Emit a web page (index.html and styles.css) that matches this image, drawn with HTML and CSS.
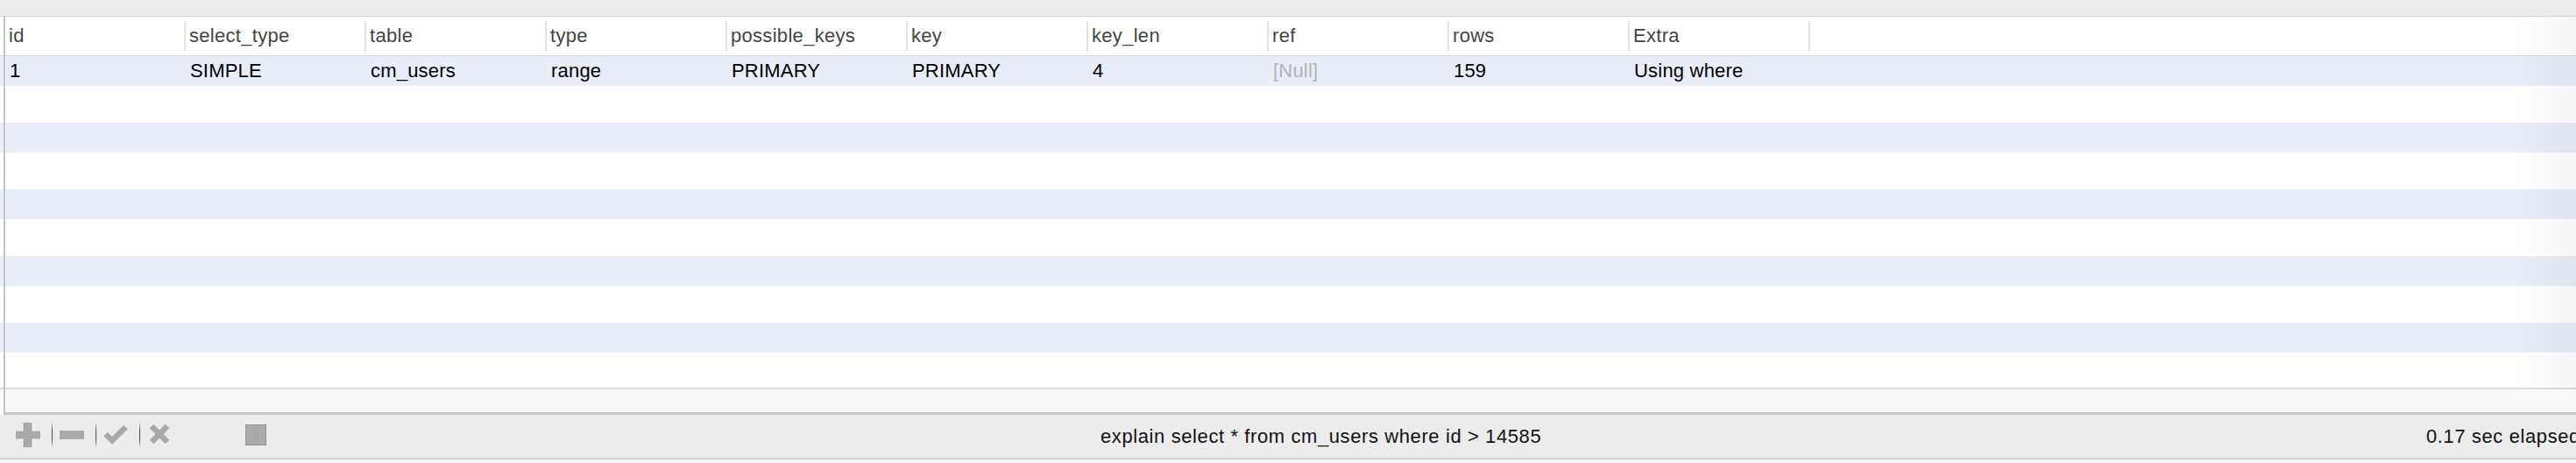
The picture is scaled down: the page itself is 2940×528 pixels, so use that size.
FILE: index.html
```html
<!DOCTYPE html>
<html>
<head>
<meta charset="utf-8">
<title>Explain result</title>
<link rel="stylesheet" href="styles.css">
</head>
<body>
<div class="topbar"></div>
<div class="pane">
  <div class="grid head">
    <div class="gutter"></div>
    <div class="hcell">id</div>
    <div class="hcell">select_type</div>
    <div class="hcell">table</div>
    <div class="hcell">type</div>
    <div class="hcell">possible_keys</div>
    <div class="hcell">key</div>
    <div class="hcell">key_len</div>
    <div class="hcell">ref</div>
    <div class="hcell">rows</div>
    <div class="hcell">Extra</div>
    <div class="hfill"></div>
  </div>
  <div class="rows">
    <div class="grid tr stripe">
      <div class="gutter"></div>
      <div class="td">1</div>
      <div class="td">SIMPLE</div>
      <div class="td">cm_users</div>
      <div class="td">range</div>
      <div class="td">PRIMARY</div>
      <div class="td">PRIMARY</div>
      <div class="td">4</div>
      <div class="td null">[Null]</div>
      <div class="td">159</div>
      <div class="td">Using where</div>
      <div class="td"></div>
    </div>
    <div class="grid tr plain"></div>
    <div class="grid tr stripe"></div>
    <div class="grid tr plain"></div>
    <div class="grid tr stripe"></div>
    <div class="grid tr plain"></div>
    <div class="grid tr stripe"></div>
    <div class="grid tr plain"></div>
    <div class="grid tr stripe"></div>
    <div class="grid tr plain"></div>
  </div>
  <div class="strip"><div class="strip-inner"></div></div>
</div>
<div class="toolbar">
  <div class="tools">
    <svg class="ico ico-plus" width="28" height="28" viewBox="0 0 28 28"><path d="M9 0h9v10h10v8H18v10H9V18H0v-8h9z" fill="#a9a9a9" stroke="#9e9e9e" stroke-width="0.6"/></svg>
    <span class="sep"></span>
    <svg class="ico ico-minus" width="28" height="28" viewBox="0 0 28 28"><rect x="0" y="9.5" width="28" height="9" fill="#a9a9a9" stroke="#9e9e9e" stroke-width="0.6"/></svg>
    <span class="sep"></span>
    <svg class="ico ico-check" width="28" height="28" viewBox="0 0 28 28"><polyline points="2.5,13 10,20.5 25.5,5" fill="none" stroke="#a9a9a9" stroke-width="6.5"/></svg>
    <span class="sep"></span>
    <svg class="ico ico-cross" width="24" height="28" viewBox="0 0 24 28"><path d="M3 4 L21 22 M21 4 L3 22" fill="none" stroke="#a9a9a9" stroke-width="6.5"/></svg>
    <svg class="ico ico-stop" width="24" height="28" viewBox="0 0 24 28"><rect x="0.5" y="2.5" width="23" height="23" fill="#aaaaaa" stroke="#979797" stroke-width="1"/></svg>
  </div>
  <span class="query">explain select * from cm_users where id &gt; 14585</span>
  <span class="elapsed">0.17 sec elapsed</span>
</div>
</body>
</html>
```
FILE: styles.css
```css
* {
  box-sizing: border-box;
}

html,
body {
  margin: 0;
  padding: 0;
}

body {
  width: 2940px;
  height: 528px;
  overflow: hidden;
  background: #f6f6f6;
  font-family: "Liberation Sans", Arial, Helvetica, sans-serif;
  font-size: 22px;
  color: #000;
}

.topbar {
  height: 19px;
  background: #ececec;
  border-bottom: 1px solid #d2d2d2;
}

.pane {
  position: relative;
  background: #ffffff;
}

/* split-view border drawn over the table's left edge */
.pane::before {
  content: "";
  position: absolute;
  left: 4px;
  top: 0;
  bottom: 0;
  width: 2px;
  background: #c4c4c4;
  z-index: 2;
}

/* faint shading at the right edge of the clipped view */
.pane::after {
  content: "";
  position: absolute;
  right: 0;
  top: 0;
  bottom: 29px;
  width: 70px;
  background: linear-gradient(to right, rgba(0, 0, 0, 0), rgba(0, 0, 0, 0.035));
  pointer-events: none;
  z-index: 1;
}

.grid {
  display: grid;
  grid-template-columns: 6px repeat(10, 206px) 1fr;
}

.head {
  height: 45px;
  border-bottom: 1px solid #d4d4d4;
  background: #fff;
}

.hcell {
  margin: 5px 0 5px;
  padding-left: 4px;
  border-right: 2px solid #e2e2e2;
  color: #454545;
  display: flex;
  align-items: center;
  white-space: nowrap;
  letter-spacing: 0.3px;
}

.rows {
  height: 380px;
  overflow: hidden;
  border-bottom: 2px solid #dcdcdc;
}

.tr {
  display: grid;
}

.tr.stripe {
  height: 34px;
  background: #e9edf8;
}

.tr.plain {
  height: 42px;
  background: #ffffff;
}

.td {
  padding-left: 5px;
  display: flex;
  align-items: center;
  white-space: nowrap;
  color: #000;
  letter-spacing: 0.2px;
}

.td.null {
  color: #b3b3b3;
}

.strip {
  height: 29px;
  background: #f9f9f9;
}

.strip-inner {
  height: 29px;
  margin-left: 4px;
  border-bottom: 3px solid #c8c8c8;
}

.toolbar {
  height: 51px;
  background: #ececec;
  border-bottom: 2px solid #d5d5d5;
  display: flex;
  align-items: center;
  white-space: nowrap;
}

.tools {
  display: flex;
  align-items: center;
  padding-left: 18px;
  margin-bottom: 3px;
  flex-shrink: 0;
}

.ico {
  display: block;
  flex-shrink: 0;
}

.sep {
  display: block;
  width: 1px;
  height: 28px;
  background: linear-gradient(to bottom, rgba(70, 70, 70, 0.1), #4d4d4d 30%, #4d4d4d 70%, rgba(70, 70, 70, 0.1));
  flex-shrink: 0;
}

.ico-plus + .sep {
  margin-left: 13px;
}

.sep + .ico {
  margin-left: 8px;
}

.ico-minus + .sep,
.ico-check + .sep {
  margin-left: 13px;
}

.sep + .ico-cross {
  margin-left: 10px;
}

.ico-stop {
  margin-left: 86px;
}

.query {
  flex: 0 0 auto;
  width: 1513px;
  margin-left: 952px;
  margin-top: 1px;
  letter-spacing: 0.6px;
  color: #111;
}

.elapsed {
  flex: 0 0 auto;
  margin-top: 1px;
  letter-spacing: 0.6px;
  color: #111;
}
```
